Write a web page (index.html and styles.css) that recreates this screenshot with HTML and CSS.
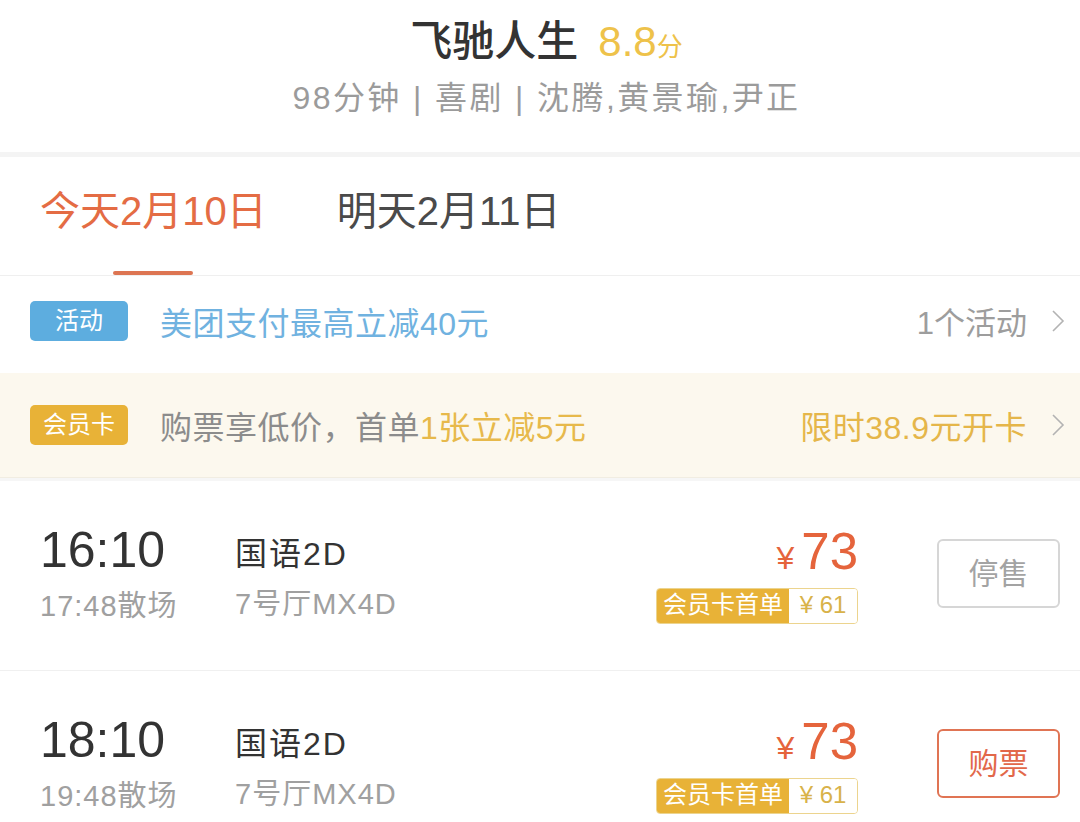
FILE: index.html
```html
<!DOCTYPE html>
<html lang="zh-CN">
<head>
  <meta charset="UTF-8">
  <title>飞驰人生 - 选座购票</title>
  <link rel="stylesheet" href="styles.css">
</head>
<body>

<div class="movie-head">
  <div class="movie-title">飞驰人生<span class="score">8.8<small>分</small></span></div>
  <div class="movie-meta">98分钟 | 喜剧 | 沈腾,黄景瑜,尹正</div>
</div>

<div class="date-tabs">
  <div class="tab active">今天2月10日</div>
  <div class="tab">明天2月11日</div>
</div>

<div class="promo promo-act">
  <span class="tag tag-blue">活动</span>
  <span class="promo-text">美团支付最高立减40元</span>
  <span class="promo-more">1个活动</span>
  <svg class="chev" width="14" height="22" viewBox="0 0 14 22"><polyline points="2,1 12,11 2,21" fill="none" stroke="#b3b3b3" stroke-width="1.6"/></svg>
</div>

<div class="promo promo-vip">
  <span class="tag tag-gold">会员卡</span>
  <span class="promo-text">购票享低价，首单<em>1张立减5元</em></span>
  <span class="promo-more">限时38.9元开卡</span>
  <svg class="chev" width="14" height="22" viewBox="0 0 14 22"><polyline points="2,1 12,11 2,21" fill="none" stroke="#b3b3b3" stroke-width="1.6"/></svg>
</div>

<div class="shows">
  <div class="show">
    <div class="show-time">
      <div class="start">16:10</div>
      <div class="end">17:48散场</div>
    </div>
    <div class="show-info">
      <div class="lang">国语2D</div>
      <div class="hall">7号厅MX4D</div>
    </div>
    <div class="show-price">
      <div class="price"><span class="yen">¥</span>73</div>
      <div class="vip-price"><span class="vip-label">会员卡首单</span><span class="vip-val">¥ 61</span></div>
    </div>
    <div class="btn btn-off">停售</div>
  </div>

  <div class="show">
    <div class="show-time">
      <div class="start">18:10</div>
      <div class="end">19:48散场</div>
    </div>
    <div class="show-info">
      <div class="lang">国语2D</div>
      <div class="hall">7号厅MX4D</div>
    </div>
    <div class="show-price">
      <div class="price"><span class="yen">¥</span>73</div>
      <div class="vip-price"><span class="vip-label">会员卡首单</span><span class="vip-val">¥ 61</span></div>
    </div>
    <div class="btn btn-buy">购票</div>
  </div>
</div>

</body>
</html>
```
FILE: styles.css
```css
body {
  margin: 0;
  background: #fff;
  font-family: "Liberation Sans", "Noto Sans CJK SC", sans-serif;
  color: #333;
}

.movie-head {
  height: 157px;
  padding: 14px 0 0 13px;
  box-sizing: border-box;
  text-align: center;
  border-bottom: 5px solid #f4f4f4;
}
.movie-title {
  font-size: 42px;
  line-height: 56px;
  font-weight: 500;
  color: #333;
}
.movie-title .score {
  margin-left: 20px;
  font-size: 42px;
  font-weight: normal;
  color: #eec24a;
}
.movie-title .score small { font-size: 26px; }
.movie-meta {
  margin-top: 1px;
  font-size: 32px;
  line-height: 44px;
  color: #9b9b9b;
  letter-spacing: 2.4px;
}

.date-tabs {
  display: flex;
  gap: 70px;
  padding-left: 40px;
  height: 118px;
  border-bottom: 1px solid #efefef;
}
.tab {
  display: flex;
  flex-direction: column;
  align-items: center;
  padding-top: 34px;
  font-size: 40px;
  line-height: 40px;
  color: #4a4a4a;
}
.tab.active { color: #e46c44; }
.tab.active::after {
  content: "";
  margin-top: auto;
  width: 80px;
  height: 4px;
  border-radius: 2px;
  background: #dd7552;
}

.promo {
  display: flex;
  align-items: center;
  padding: 0 15px 0 30px;
}
.promo-act {
  height: 97px;
  padding-bottom: 8px;
  box-sizing: border-box;
  background: #fff;
}
.promo-vip {
  height: 104px;
  background: #fcf8ee;
  border-bottom: 1px solid #f1ede2;
}
.tag {
  width: 98px;
  height: 40px;
  border-radius: 5px;
  color: #fff;
  font-size: 24px;
  line-height: 40px;
  text-align: center;
}
.tag-blue { background: #5daddf; }
.tag-gold { background: #e8b237; }
.promo-text {
  margin-left: 32px;
  font-size: 32px;
  letter-spacing: 0.5px;
  flex: 1;
}
.promo-act .promo-text { color: #70b2e0; }
.promo-vip .promo-text { color: #8c8c8c; }
.promo-vip .promo-text em { font-style: normal; color: #e7b94b; }
.promo-more {
  font-size: 31px;
  color: #9d9d9d;
}
.promo-vip .promo-more {
  font-size: 32px;
  letter-spacing: 0.5px;
  color: #e5b64a;
}
.chev { margin-left: 24px; }

.shows { border-top: 3px solid #f6f6f6; }
.show {
  display: flex;
  align-items: center;
  height: 189px;
  box-sizing: border-box;
  padding: 0 20px 4px 40px;
}
.show + .show {
  height: 190px;
  border-top: 1px solid #f0f0f0;
}

.show-time { width: 195px; }
.start {
  font-size: 50px;
  line-height: 58px;
  color: #333;
}
.end, .hall {
  font-size: 29px;
  line-height: 42px;
  color: #a0a0a0;
}
.end {
  margin-top: 6px;
  letter-spacing: 1px;
}
.show-info {
  flex: 1;
  padding-top: 2px;
}
.lang {
  font-size: 32px;
  line-height: 58px;
  letter-spacing: 2px;
  color: #333;
}
.hall { letter-spacing: 1px; }

.show-price {
  display: flex;
  flex-direction: column;
  align-items: flex-end;
}
.price {
  font-size: 51px;
  line-height: 56px;
  color: #e5643c;
}
.price .yen {
  font-size: 32px;
  line-height: 1;
  margin-right: 7px;
}
.vip-price {
  display: flex;
  margin-top: 8px;
  height: 34px;
  border-radius: 4px;
  overflow: hidden;
  border: 1px solid #ecd48e;
  font-size: 24px;
  line-height: 32px;
}
.vip-label {
  background: #e8b237;
  color: #fff;
  padding: 0 6px;
}
.vip-val {
  width: 68px;
  text-align: center;
  color: #d8b24a;
  background: #fff;
}

.btn {
  margin-left: 79px;
  width: 123px;
  height: 69px;
  box-sizing: border-box;
  border-radius: 6px;
  font-size: 30px;
  line-height: 65px;
  text-align: center;
}
.btn-off { border: 2px solid #d6d6d6; color: #a3a3a3; }
.btn-buy { border: 2px solid #e07454; color: #e2684a; }
```
